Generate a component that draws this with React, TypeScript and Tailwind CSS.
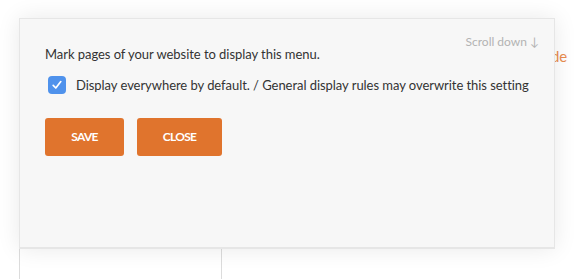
import React, { useState } from "react";

const App: React.FC = () => {
  const [checked, setChecked] = useState(true);

  return (
    <div className="relative h-[279px] w-[585px] overflow-hidden bg-white font-['Lato','Open_Sans',sans-serif]">
      {/* page behind the popup */}
      <div className="absolute left-[19px] top-[200px] h-[79px] w-[203px] border-x border-[#dcdcdc]" />
      <span className="absolute left-[536px] top-[45px] text-[15px] text-[#e98d4f]">Hide</span>

      {/* popup */}
      <div className="absolute left-[19px] top-[18px] flex h-[231px] w-[536px] flex-col border border-b-2 border-[#e6e6e6] bg-[#f7f7f7] px-[25px] shadow-[0_0_22px_rgba(0,0,0,0.09)]">
        <div className="-mr-[10px] flex justify-end pt-[15px] text-[12px] leading-[16px] text-[#b3b3b3]">
          Scroll down ↓
        </div>
        <p className="mt-[-6px] text-[13px] leading-[20px] tracking-[-0.05px] text-[#333]">
          Mark pages of your website to display this menu.
        </p>
        <label className="mt-[11px] flex items-center gap-[10px] whitespace-nowrap pl-[3px] text-[13px] leading-[20px] tracking-[-0.05px] text-[#333]">
          <button
            type="button"
            onClick={() => setChecked(!checked)}
            className="flex h-[18px] w-[18px] shrink-0 items-center justify-center rounded-[4px] bg-[#4f92ec]"
          >
            {checked && (
              <svg width="12" height="12" viewBox="0 0 12 12" fill="none">
                <path d="M2.2 6.4 L4.8 9 L9.8 2.6" stroke="white" strokeWidth="1.7" strokeLinecap="round" strokeLinejoin="round" />
              </svg>
            )}
          </button>
          <span>Display everywhere by default. / General display rules may overwrite this setting</span>
        </label>
        <div className="mt-[23px] flex gap-[13px]">
          <button className="h-[38px] w-[79px] rounded-[3px] bg-[#e0742d] text-[12px] font-bold tracking-[-0.7px] text-white">
            SAVE
          </button>
          <button className="h-[38px] w-[85px] rounded-[3px] bg-[#e0742d] text-[12px] font-bold tracking-[-0.7px] text-white">
            CLOSE
          </button>
        </div>
      </div>
    </div>
  );
};

export default App;
